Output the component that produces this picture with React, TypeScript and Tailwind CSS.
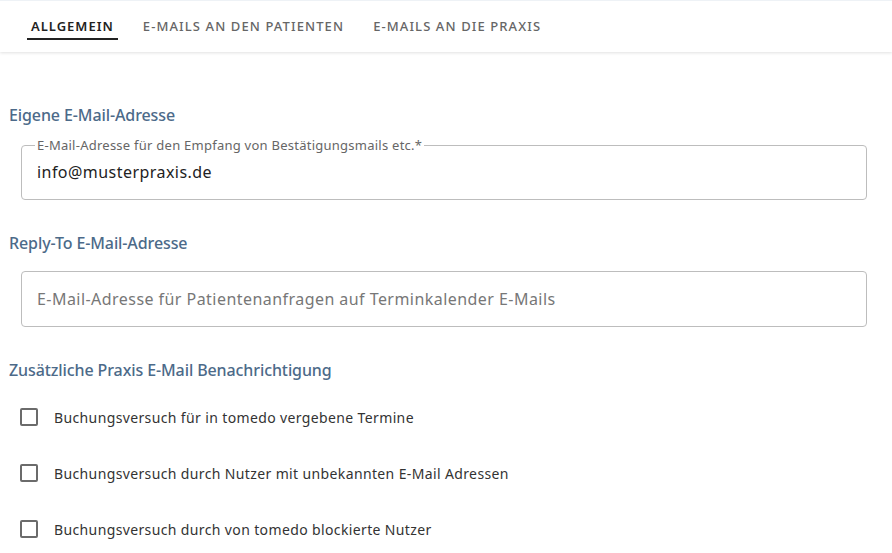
import React from "react";

const font = { fontFamily: '"Noto Sans", "Open Sans", sans-serif' };

function Checkbox({ label }: { label: string }) {
  return (
    <label className="flex items-center h-[56px] cursor-pointer">
      <span className="ml-[20px] w-[18px] h-[18px] border-2 border-[#6b6b6b] rounded-[2px] shrink-0" />
      <span className="ml-[16px] text-[14px] text-[#333] tracking-[0.37px]">{label}</span>
    </label>
  );
}

export default function App() {
  return (
    <div className="w-[892px] h-[553px] bg-white overflow-hidden" style={font}>
      <div className="h-[52px] border-t border-[#eef2f6] shadow-[0_1px_3px_rgba(0,0,0,0.12)] bg-white flex items-stretch pl-[27px] gap-[21px]">
        <div className="relative flex items-center px-[4px] text-[13px] font-semibold tracking-[1.0px] text-[#222]">
          ALLGEMEIN
          <span className="absolute left-0 right-0 top-[37px] h-[2px] bg-[#222]" />
        </div>
        <div className="flex items-center px-[4px] text-[13px] font-medium tracking-[1.1px] text-[#666]">
          E-MAILS AN DEN PATIENTEN
        </div>
        <div className="flex items-center px-[4px] text-[13px] font-medium tracking-[1.1px] text-[#666]">
          E-MAILS AN DIE PRAXIS
        </div>
      </div>

      <div className="pt-[51px]">
        <h2 className="pl-[9px] text-[16px] font-medium text-[#4c6a89] leading-[24px] tracking-[-0.1px]">Eigene E-Mail-Adresse</h2>
        <fieldset className="mt-[16px] ml-[21px] w-[846px] h-[62px] border border-[#bdbdbd] rounded-[4px] px-[13px] -translate-y-[5px]">
          <legend className="px-[2px] text-[13px] text-[#666] leading-[14px] tracking-[0.25px]">
            E-Mail-Adresse für den Empfang von Bestätigungsmails etc.*
          </legend>
          <div className="text-[16px] text-[#222] leading-[24px] pl-[2px] mt-[8px] tracking-[0.45px]">info@musterpraxis.de</div>
        </fieldset>

        <h2 className="mt-[26px] pl-[9px] text-[16px] font-medium text-[#4c6a89] leading-[24px] tracking-[-0.1px]">Reply-To E-Mail-Adresse</h2>
        <div className="mt-[16px] ml-[21px] w-[846px] h-[56px] border border-[#bdbdbd] rounded-[4px] flex items-center px-[15px]">
          <span className="text-[16px] text-[#777] tracking-[0.45px]">E-Mail-Adresse für Patientenanfragen auf Terminkalender E-Mails</span>
        </div>

        <h2 className="mt-[31px] pl-[9px] text-[16px] font-medium text-[#4c6a89] leading-[24px] tracking-[-0.1px]">Zusätzliche Praxis E-Mail Benachrichtigung</h2>
        <div className="mt-[7px]">
          <Checkbox label="Buchungsversuch für in tomedo vergebene Termine" />
          <Checkbox label="Buchungsversuch durch Nutzer mit unbekannten E-Mail Adressen" />
          <Checkbox label="Buchungsversuch durch von tomedo blockierte Nutzer" />
        </div>
      </div>
    </div>
  );
}
